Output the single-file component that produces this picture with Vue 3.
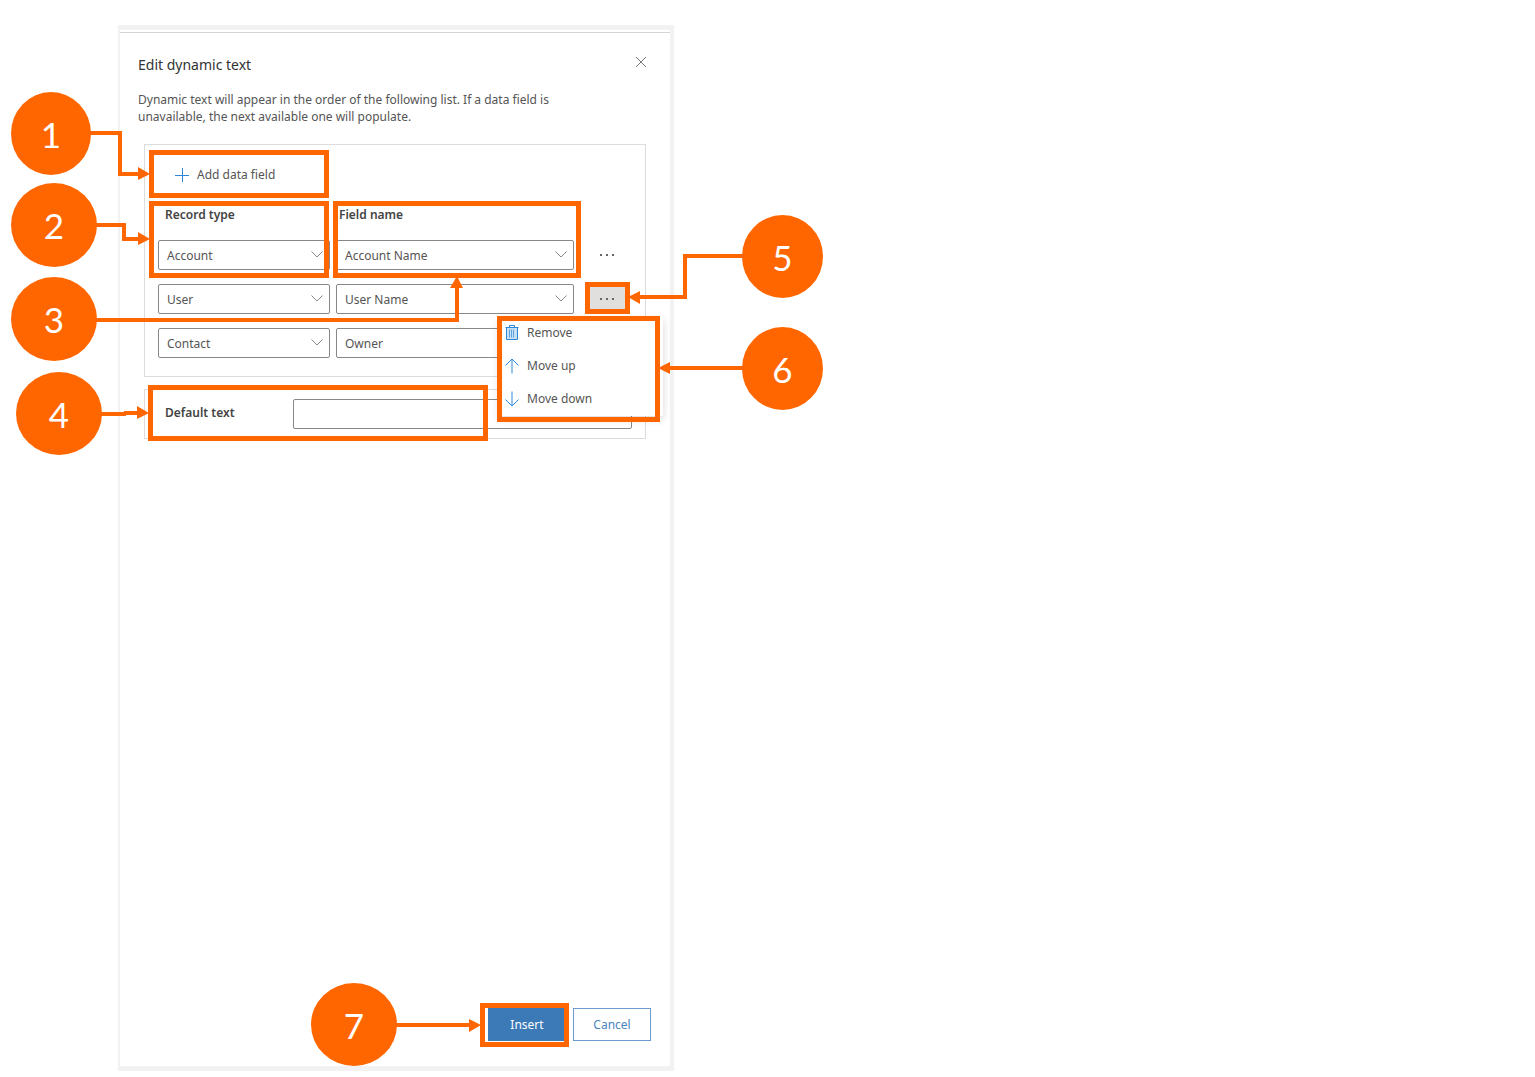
<script setup>
import { ref } from 'vue'

const recordTypes = ['Account', 'User', 'Contact']
const fieldNames = ['Account Name', 'User Name', 'Owner']
const rows = ref([
  { record: 'Account', field: 'Account Name' },
  { record: 'User', field: 'User Name' },
  { record: 'Contact', field: 'Owner' },
])
const openRow = ref(1)
const defaultText = ref('')
</script>

<template>
  <div class="page">
    <main class="panel">
      <header class="head">
        <h1>Edit dynamic text</h1>
        <button class="close" type="button" aria-label="Close">
          <svg width="12" height="12" viewBox="0 0 12 12"><path d="M1 1L11 11M11 1L1 11" /></svg>
        </button>
      </header>
      <p class="intro">
        Dynamic text will appear in the order of the following list. If a data field is
        unavailable, the next available one will populate.
      </p>

      <section class="box">
        <button class="add" type="button">
          <svg width="14" height="14" viewBox="0 0 14 14"><path d="M7.500 0V14M0 7.500H14" /></svg>
          Add data field
        </button>
        <div class="row labels">
          <span id="record-label" class="record">Record type</span>
          <span id="field-label" class="field">Field name</span>
        </div>
        <div v-for="(row, i) in rows" :key="i" class="row">
          <div class="pick record">
            <select v-model="row.record" aria-labelledby="record-label">
              <option v-for="r in recordTypes" :key="r">{{ r }}</option>
            </select>
            <svg width="12" height="7" viewBox="0 0 12 7"><path d="M.5 .5L6 6L11.500 .5" /></svg>
          </div>
          <div class="pick field">
            <select v-model="row.field" aria-labelledby="field-label">
              <option v-for="f in fieldNames" :key="f">{{ f }}</option>
            </select>
            <svg width="12" height="7" viewBox="0 0 12 7"><path d="M.5 .5L6 6L11.500 .5" /></svg>
          </div>
          <div v-if="i < 2" class="more-wrap">
            <button
              class="more"
              :class="{ open: openRow === i }"
              type="button"
              aria-label="More actions"
              @click="openRow = openRow === i ? -1 : i"
            >
              <svg width="16" height="2" viewBox="0 0 16 2">
                <path d="M1 0H3V2H1ZM7 0H9V2H7ZM13 0H15V2H13Z" />
              </svg>
            </button>
            <div v-if="openRow === i" class="menu">
              <button type="button">
                <svg width="14" height="16" viewBox="0 0 14 16">
                  <path class="tint" d="M2 3H12V15H2Z" />
                  <path d="M.5 2.500H13.500M4.500 2.500V.5H9.500V2.500M1.500 2.500V14.500H12.500V2.500" />
                  <path class="ribs" d="M4.500 4.500V12.500M6.500 4.500V12.500M8.500 4.500V12.500" />
                </svg>
                Remove
              </button>
              <button type="button">
                <svg width="14" height="16" viewBox="0 0 14 16"><path d="M7 15.500V1M.5 7.500L7 1L13.500 7.500" /></svg>
                Move up
              </button>
              <button type="button">
                <svg width="14" height="16" viewBox="0 0 14 16"><path d="M7 .5V15M.5 8.500L7 15L13.500 8.500" /></svg>
                Move down
              </button>
            </div>
          </div>
        </div>
      </section>

      <section class="box default">
        <label for="default-text">Default text</label>
        <input id="default-text" v-model="defaultText" type="text" />
      </section>

      <footer class="actions">
        <button class="primary" type="button">Insert</button>
        <button type="button">Cancel</button>
      </footer>
    </main>

    <div class="notes">
      <svg width="830" height="460" viewBox="0 0 830 460">
        <path class="line" d="M90 133H120V174H139M96 225H124V239H139M96 320H457V287M101 414H126M124 413H138M743 256H685V297H639M743 368H669" />
        <path class="tip" d="M138 167L150 174L138 180ZM138 232L150 239L138 245ZM450 288L457 276L463 288ZM137 406L149 413L137 419ZM640 291L628 297L640 304ZM670 362L658 368L670 374Z" />
      </svg>
      <i class="frame f1"></i>
      <i class="frame f2"></i>
      <i class="frame f3"></i>
      <i class="frame f4"></i>
      <i class="frame f5"></i>
      <i class="frame f6"></i>
      <b class="pin p1">1</b>
      <b class="pin p2">2</b>
      <b class="pin p3">3</b>
      <b class="pin p4">4</b>
      <b class="pin p5">5</b>
      <b class="pin p6">6</b>
    </div>
    <div class="notes foot">
      <svg width="600" height="94" viewBox="0 0 600 94">
        <path class="line" d="M396 42H470" />
        <path class="tip" d="M469 36L481 42L469 49Z" />
      </svg>
      <i class="frame f7"></i>
      <b class="pin p7">7</b>
    </div>
  </div>
</template>

<style>
body {
  background: #fff;
}
</style>

<style scoped>
* {
  box-sizing: border-box;
}
.page {
  position: relative;
  min-height: 100vh;
  padding: 25px 0 6px 118px;
  font: 12px/17px "Noto Sans", "Open Sans", sans-serif;
  color: #555;
}
button,
input,
select {
  font: inherit;
  color: inherit;
  margin: 0;
}
button {
  border: 0;
  padding: 0;
  background: none;
  cursor: pointer;
}
svg {
  display: block;
  flex: none;
  fill: none;
  stroke: #777;
}
.panel {
  display: flex;
  flex-direction: column;
  width: 100%;
  max-width: 556px;
  min-height: calc(100vh - 31px);
  padding: 2px 0 25px;
  border: solid #f2f2f2;
  border-width: 5px 4px 5px 2px;
}
.head {
  display: flex;
  justify-content: space-between;
  align-items: flex-start;
  border-top: 1px solid #d4d4d4;
  padding: 20px 20px 0 18px;
}
h1 {
  margin: 0;
  font-size: 14px;
  line-height: 24px;
  font-weight: 400;
  color: #333;
}
.close {
  padding: 3px;
}
.intro {
  margin: 14px 100px 19px 18px;
}
.box {
  margin: 0 24px 12px;
  padding: 8px 13px;
  border: 1px solid #dcdcdc;
}
.add {
  display: flex;
  align-items: center;
  gap: 8px;
  height: 43px;
  padding-left: 17px;
}
.add svg {
  stroke: #2b88d8;
}
.row {
  display: flex;
  gap: 6px;
  height: 30px;
  margin-bottom: 14px;
}
.row:last-child {
  margin-bottom: 10px;
}
.labels {
  height: 17px;
  margin: 10px 0 17px;
  padding-left: 7px;
  font-weight: 600;
  color: #444;
}
.record {
  flex: 0 1 172px;
}
.labels .record {
  flex-basis: 168px;
}
.field {
  flex: 0 1 238px;
}
.pick {
  position: relative;
}
.pick select {
  appearance: none;
  width: 100%;
  height: 30px;
  padding: 0 28px 0 8px;
  border: 1px solid #8a8886;
  border-radius: 2px;
  background: #fff;
}
.pick svg {
  position: absolute;
  right: 7px;
  top: 11px;
  pointer-events: none;
}
.pick path {
  stroke: #8a8a8a;
}
.more-wrap {
  position: relative;
  margin-left: 8px;
}
.more {
  display: flex;
  align-items: center;
  justify-content: center;
  width: 38px;
  height: 30px;
}
.more svg {
  fill: #666;
  stroke: none;
}
.more.open {
  background: #e1dfdd;
}
.menu {
  position: absolute;
  z-index: 1;
  top: 33px;
  right: -37px;
  width: 164px;
  height: 99px;
  background: #fff;
  box-shadow: 0 3px 8px rgba(0, 0, 0, 0.16);
}
.menu button {
  display: flex;
  align-items: center;
  gap: 8px;
  width: 100%;
  height: 33px;
  padding: 0 0 2px 6px;
}
.menu svg {
  stroke: #2b88d8;
}
.menu .tint {
  fill: #c7e0f4;
  stroke: none;
}
.menu .ribs {
  stroke: #5ba3e0;
}
.default {
  display: flex;
  align-items: flex-start;
  padding: 9px 13px 9px 20px;
}
.default label {
  flex: 0 0 128px;
  line-height: 28px;
  font-weight: 600;
  color: #444;
}
.default input {
  flex: 1;
  min-width: 0;
  height: 30px;
  padding: 0 8px;
  border: 1px solid #8a8886;
  border-radius: 2px;
}
.actions {
  display: flex;
  justify-content: flex-end;
  gap: 7px;
  margin-top: auto;
  padding-right: 19px;
}
.actions button {
  width: 78px;
  height: 33px;
  border: 1px solid #6c9bd0;
  color: #4a84bf;
}
.actions .primary {
  border-color: #3b79b7;
  background: #3b79b7;
  color: #fff;
}
.notes {
  position: absolute;
  z-index: 2;
  top: 0;
  left: 0;
  pointer-events: none;
}
.foot {
  top: auto;
  bottom: 0;
}
.line {
  stroke: #ff6600;
  stroke-width: 4;
}
.tip {
  fill: #ff6600;
  stroke: none;
}
.frame,
.pin {
  position: absolute;
}
.frame {
  border: 5px solid #ff6600;
}
.f1 { left: 149px; top: 150px; width: 180px; height: 48px; }
.f2 { left: 149px; top: 201px; width: 180px; height: 77px; }
.f3 { left: 333px; top: 201px; width: 248px; height: 77px; }
.f4 { left: 148px; top: 385px; width: 340px; height: 56px; }
.f5 { left: 585px; top: 282px; width: 45px; height: 32px; }
.f6 { left: 497px; top: 316px; width: 163px; height: 106px; }
.f7 { left: 480px; bottom: 30px; width: 89px; height: 44px; }
.pin {
  display: flex;
  align-items: center;
  justify-content: center;
  width: 86px;
  height: 83px;
  border-radius: 50%;
  background: #ff6600;
  color: #fff;
  font: 35px/44px Lato, "Open Sans", sans-serif;
}
.p1 { left: 11px; top: 92px; width: 80px; }
.p2 { left: 11px; top: 183px; height: 84px; }
.p3 { left: 11px; top: 277px; height: 84px; }
.p4 { left: 16px; top: 372px; }
.p5 { left: 742px; top: 215px; width: 81px; }
.p6 { left: 742px; top: 327px; width: 81px; }
.p7 { left: 311px; bottom: 11px; }
</style>
